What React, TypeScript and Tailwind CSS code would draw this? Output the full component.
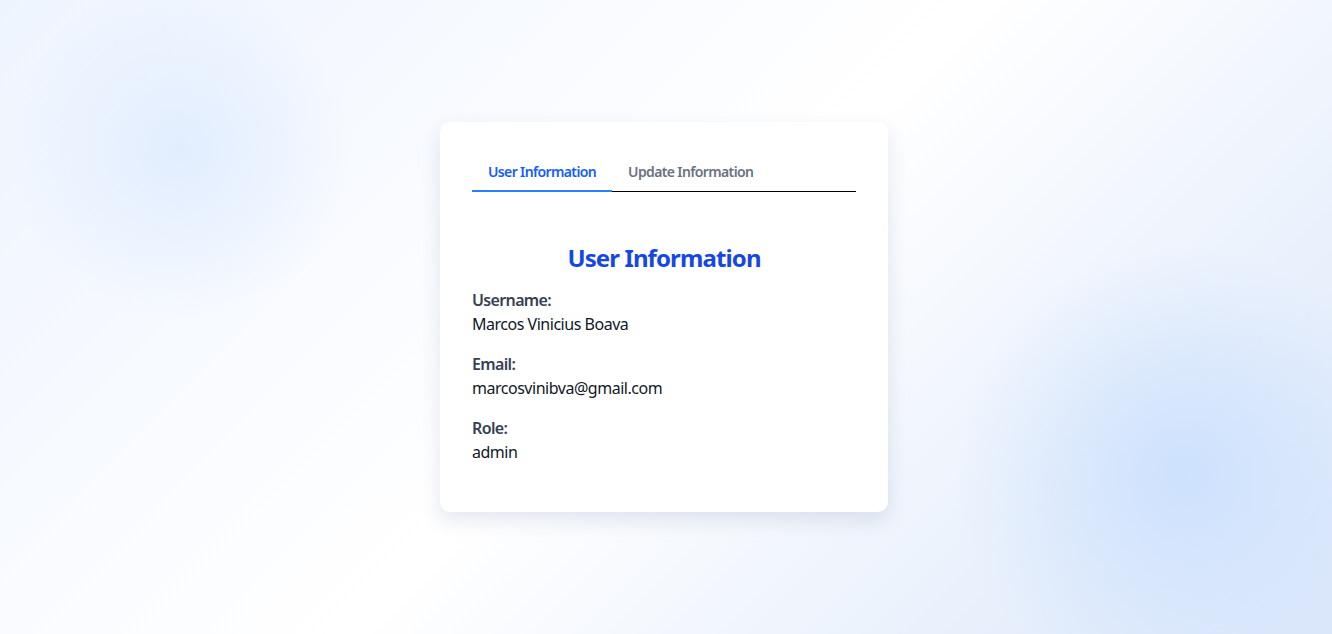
import { useState } from "react";

const user = {
  username: "Marcos Vinicius Boava",
  email: "marcosvinibva@gmail.com",
  role: "admin",
};

const fields = [
  { label: "Username:", value: user.username },
  { label: "Email:", value: user.email },
  { label: "Role:", value: user.role },
];

const App = () => {
  const [tab, setTab] = useState<"info" | "update">("info");

  return (
    <main className="min-h-screen w-full flex items-center justify-center pr-1 font-['Noto_Sans',sans-serif] bg-[radial-gradient(circle_at_180px_150px,#e1edfe_0,rgba(225,237,254,0)_170px),radial-gradient(circle_at_1185px_475px,#cde1fd_0,rgba(205,225,253,0)_230px),linear-gradient(135deg,#eef4fe_0%,#ffffff_50%,#dbe7fa_100%)]">
      <section className="w-[448px] h-[390px] bg-white rounded-[10px] shadow-[0_8px_20px_rgba(30,60,120,0.12)] px-8 pt-8">
        <div className="flex border-b border-black">
          <button
            onClick={() => setTab("info")}
            className={`px-4 py-2 text-sm font-semibold tracking-[-0.045em] -mb-px border-b-2 ${
              tab === "info"
                ? "text-blue-600 border-blue-500"
                : "text-gray-500 border-transparent"
            }`}
          >
            User Information
          </button>
          <button
            onClick={() => setTab("update")}
            className={`px-4 py-2 text-sm font-semibold tracking-[-0.045em] -mb-px border-b-2 ${
              tab === "update"
                ? "text-blue-600 border-blue-500"
                : "text-gray-500 border-transparent"
            }`}
          >
            Update Information
          </button>
        </div>

        <div className="pt-[50px]">
          <h2 className="text-2xl font-bold tracking-[-0.037em] text-blue-700 text-center mb-[14px]">
            User Information
          </h2>
          <div className="flex flex-col gap-4 tracking-[-0.03em]">
            {fields.map((f) => (
              <div key={f.label}>
                <p className="font-semibold text-gray-700 tracking-[-0.04em]">{f.label}</p>
                <p className="text-gray-900">{f.value}</p>
              </div>
            ))}
          </div>
        </div>
      </section>
    </main>
  );
};

export default App;
